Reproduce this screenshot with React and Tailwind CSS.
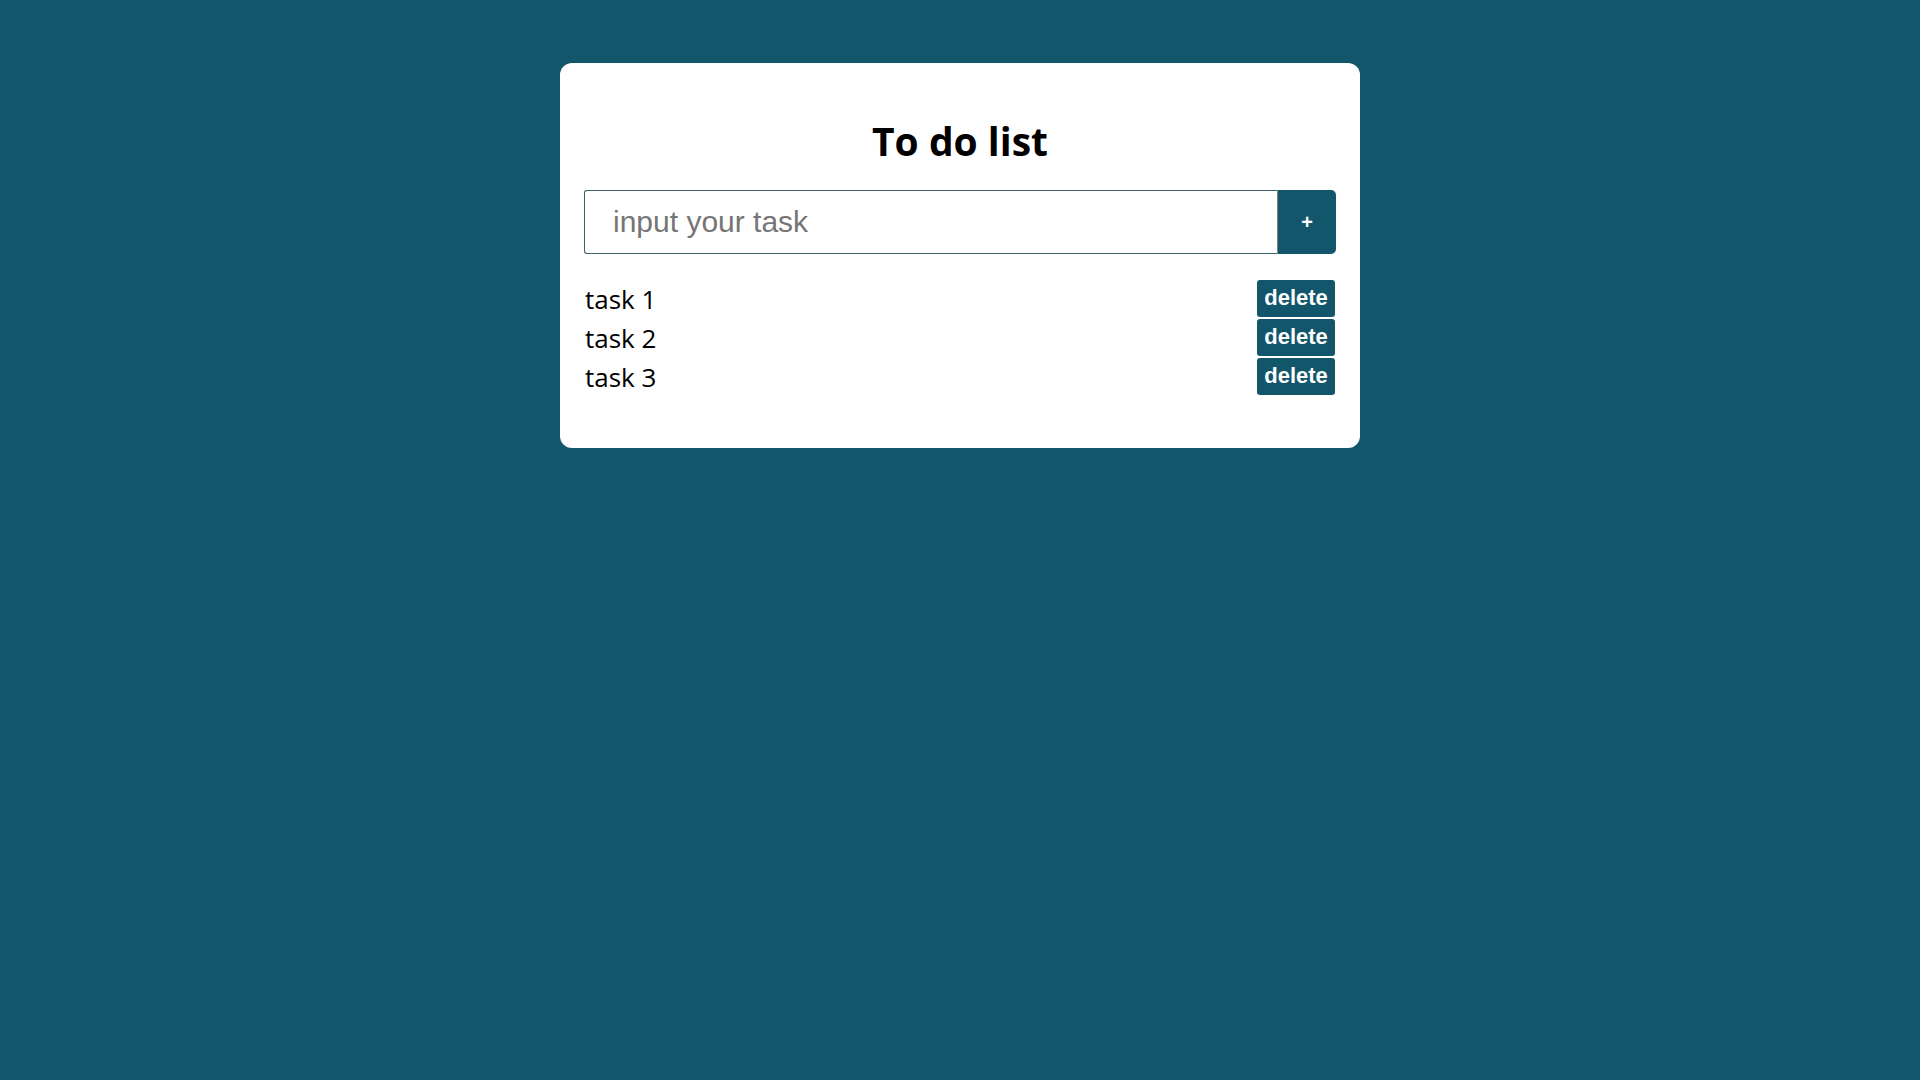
import { useState } from "react";

const App = () => {
  const [tasks, setTasks] = useState(["task 1", "task 2", "task 3"]);
  const [value, setValue] = useState("");

  const addTask = () => {
    if (!value.trim()) return;
    setTasks([...tasks, value.trim()]);
    setValue("");
  };

  return (
    <div className="min-h-screen w-full bg-[#11566a] pt-[63px]">
      <div className="mx-auto w-[800px] rounded-[12px] bg-white px-6 pt-[51px] pb-[53px]">
        <h1 className="text-center font-['Open_Sans',sans-serif] text-[39px] font-bold leading-[53px] text-black">
          To do list
        </h1>

        {/* input row */}
        <div className="mt-[23px] flex h-[64px]">
          <input
            value={value}
            onChange={(e) => setValue(e.target.value)}
            placeholder="input your task"
            className="h-full flex-1 rounded-l-[3px] border border-[#3d5f6a] border-r-[#808080] pl-7 font-['Liberation_Sans',Arial,sans-serif] text-[30px] text-black outline-none placeholder:text-[#757575]"
          />
          <button
            onClick={addTask}
            className="h-full w-[58px] rounded-r-[5px] bg-[#11566a] font-['Liberation_Sans',Arial,sans-serif] text-[20px] font-bold text-white"
          >
            +
          </button>
        </div>

        {/* tasks */}
        <ul className="mt-[26px] flex flex-col gap-[2px]">
          {tasks.map((task, i) => (
            <li key={i} className="flex h-[37px] items-center justify-between">
              <span className="pl-px pt-[2px] font-['Open_Sans',sans-serif] text-[26px] text-black">{task}</span>
              <button
                onClick={() => setTasks(tasks.filter((_, j) => j !== i))}
                className="mr-px h-[37px] w-[78px] rounded-[3px] bg-[#11566a] pb-[2px] font-['Liberation_Sans',Arial,sans-serif] text-[22px] font-bold leading-none text-white"
              >
                delete
              </button>
            </li>
          ))}
        </ul>
      </div>
    </div>
  );
};

export default App;
